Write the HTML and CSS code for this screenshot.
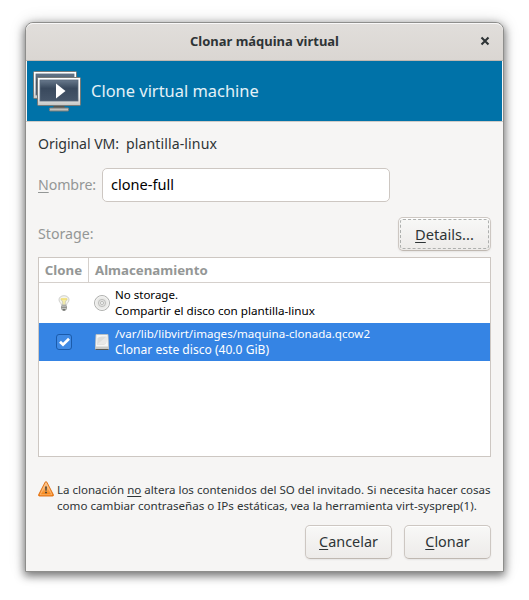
FILE: index.html
```html
<!DOCTYPE html>
<html lang="es">
<head>
<meta charset="utf-8">
<title>Clonar máquina virtual</title>
<link rel="stylesheet" href="styles.css">
</head>
<body>
<main class="window">
  <header class="titlebar">
    <h1 class="title">Clonar máquina virtual</h1>
    <svg class="close" width="10" height="10" viewBox="0 0 10 10"><path d="M1.500 1.500 8.500 8.500M8.500 1.500 1.500 8.500" stroke="#2e3436" stroke-width="2.100" fill="none"/></svg>
  </header>
  <section class="banner">
    <svg class="vm-icon" width="50" height="42" viewBox="0 0 50 42">
      <defs>
        <linearGradient id="frame" x1="0" y1="0" x2="0" y2="1"><stop offset="0" stop-color="#fff"/><stop offset=".7" stop-color="#eee"/><stop offset="1" stop-color="#c4c5c3"/></linearGradient>
        <linearGradient id="screen" x1="0" y1="0" x2="0" y2="1"><stop offset="0" stop-color="#68798c"/><stop offset=".4" stop-color="#39495d"/><stop offset="1" stop-color="#46566a"/></linearGradient>
      </defs>
      <rect x="1.500" y=".5" width="43" height="27" rx="1" fill="url(#frame)" stroke="#777a78"/>
      <rect x="4" y="3" width="38" height="21" fill="url(#screen)" stroke="#59697c" stroke-width=".8"/>
      <path d="M22 34h10l1 3H21z" fill="#555753"/>
      <rect x="17.500" y="37" width="19" height="3" rx=".5" fill="#bfc1be" stroke="#777a78"/>
      <rect x="5.500" y="6.500" width="43" height="28" rx="1" fill="url(#frame)" stroke="#777a78"/>
      <rect x="8" y="9" width="38" height="21" fill="url(#screen)" stroke="#59697c" stroke-width=".8"/>
      <path d="M24 12.500v15l9.500-7.500z" fill="#fff"/>
    </svg>
    <span class="banner-text">Clone virtual machine</span>
  </section>
  <section class="content">
    <div class="origin"><span class="origin-label">Original VM:</span><span class="origin-value">plantilla-linux</span></div>
    <div class="name-row"><label class="dim name-label"><u>N</u>ombre:</label><div class="entry">clone-full</div></div>
    <div class="storage-row"><span class="dim">Storage:</span><button class="button focused"><span><u>D</u>etails...</span></button></div>
    <div class="table">
      <div class="row head"><div class="cell-check">Clone</div><div class="cell-store">Almacenamiento</div></div>
      <div class="row first">
        <div class="cell-check">
          <svg width="16" height="16" viewBox="0 0 16 16"><path d="M8 .7C5 .7 3 2.400 3 4.800c0 2.400 2.300 3.200 2.500 5.200h5C10.700 8 13 7.200 13 4.800 13 2.400 11 .7 8 .7z" fill="#f4f4ee" stroke="#c3c4c0" stroke-width=".8"/><path d="M4.800 4.500h6.400L9.300 6.800v2.700H6.700V6.800z" fill="#f5eeaa"/><path d="M4.800 4h6.400" stroke="#f1da55" stroke-width="1.300"/><path d="M5 4.500 6.700 6.800v3M11 4.500 9.300 6.800v3" stroke="#b9b8a8" stroke-width=".6" fill="none"/><rect x="5.500" y="10.200" width="5" height="4.600" rx="1.200" fill="#c2c4c0" stroke="#888a85" stroke-width=".7"/><path d="M5.500 12.300h5" stroke="#777972" stroke-width=".8"/><path d="M6.700 15h2.600" stroke="#3a3d38"/></svg>
        </div>
        <div class="cell-store">
          <svg width="18" height="18" viewBox="0 0 18 18"><circle cx="9" cy="9" r="7.500" fill="#e9e9e7" stroke="#b0b1af"/><circle cx="9" cy="9" r="6.400" fill="none" stroke="#f6f6f5" stroke-width=".8"/><circle cx="9" cy="9" r="3.600" fill="#e3e3e1" stroke="#b4b5b3" stroke-width=".8"/><circle cx="9" cy="9" r="1.500" fill="#fff" stroke="#a0a29f" stroke-width=".7"/></svg>
          <p class="lines"><span class="t1">No storage.</span><span class="t2">Compartir el disco con plantilla-linux</span></p>
        </div>
      </div>
      <div class="row selected">
        <div class="cell-check">
          <svg width="16" height="16" viewBox="0 0 16 16"><rect x=".5" y=".5" width="15" height="15" rx="2.500" fill="#3f8ae5" stroke="#1b5bab"/><path d="M4 7.800 7 10.700 13 4.700" stroke="#fff" stroke-width="2.700" fill="none"/></svg>
        </div>
        <div class="cell-store">
          <svg width="18" height="18" viewBox="0 0 18 18"><path d="M3 1.500h12l.5 11.500v3.500h-13V13z" fill="#f5f5f4" stroke="#c0c1be" stroke-width=".8"/><path d="M4.500 5Q6 3.500 9 3.500h4.500V8q0 4-4.500 4h-5z" fill="#dcdddb"/><path d="M4 11.500 13.500 3.500V8q0 3.500-5 3.500z" fill="#e8e8e7"/><path d="M2.500 13.500h13v2.500h-13z" fill="#c9cac7"/><path d="M2.500 16.500h13" stroke="#555753"/></svg>
          <p class="lines"><span class="t3">/var/lib/libvirt/images/maquina-clonada.qcow2</span><span class="t4">Clonar este disco (40.0 GiB)</span></p>
        </div>
      </div>
    </div>
    <div class="notice">
      <svg width="16" height="16" viewBox="0 0 16 16"><defs><linearGradient id="warn" x1="0" y1="0" x2="0" y2="1"><stop offset="0" stop-color="#fac58e"/><stop offset=".5" stop-color="#f9ab5c"/><stop offset="1" stop-color="#f57900"/></linearGradient></defs><path d="M7.200 1.100Q8 0 8.800 1.100L15.400 13.800Q15.800 14.900 14.600 15H1.400Q.2 14.900.6 13.800z" fill="url(#warn)" stroke="#dc6a0c" stroke-width=".9"/><path d="M8 2.400 13.900 13.800H2.100z" fill="none" stroke="#fcc590" stroke-width=".7"/><path d="M7.200 5.500h1.600L8.500 9.800h-1zM7.200 10.800h1.600v1.500H7.200z" fill="#2e3436"/></svg>
      <p class="lines"><span class="n1">La clonación <u>no</u> altera los contenidos del SO del invitado. Si necesita hacer cosas</span><span class="n2">como cambiar contraseñas o IPs estáticas, vea la herramienta virt-sysprep(1).</span></p>
    </div>
    <footer class="actions"><button class="button cancel"><span><u>C</u>ancelar</span></button><button class="button clone"><span><u>C</u>lonar</span></button></footer>
  </section>
</main>
</body>
</html>
```
FILE: styles.css
```css
* { box-sizing: border-box; }
body {
  margin: 0;
  padding: 22px 25px 28px;
  height: 600px;
  overflow: hidden;
  background: #fff;
  color: #2e3436;
  font-family: "Noto Sans", sans-serif;
}
h1, p { margin: 0; }
svg { display: block; flex: none; }
u { text-decoration: underline; text-decoration-thickness: 1px; text-underline-offset: 2px; text-decoration-skip-ink: none; }
.window {
  width: 479px;
  height: 550px;
  border: 1px solid #8e8e8c;
  border-radius: 8px 8px 0 0;
  background: #f6f5f4;
  box-shadow: 0 3px 9px 1px rgba(0, 0, 0, .5), 0 0 18px rgba(0, 0, 0, .12);
  overflow: hidden;
}
.titlebar {
  display: flex;
  align-items: center;
  height: 38px;
  padding: 0 13px 2px 23px;
  border-bottom: 1px solid #bfb8b1;
  border-radius: 7px 7px 0 0;
  background: linear-gradient(#e1dedb, #dad6d2);
  box-shadow: inset 0 1px #f9f8f8;
}
.title { flex: 1; text-align: center; font-size: 12.980px; line-height: 18px; }
.banner {
  display: flex;
  align-items: center;
  height: 60px;
  margin: 0 1px;
  padding-left: 5px;
  background: #0072a8;
  color: #e4f1f7;
}
.vm-icon { margin-top: 2px; }
.banner-text { margin-left: 9px; font-size: 16.460px; line-height: 24px; }
.content { padding: 0 12px; border-top: 1px solid #d0ccc8; }
.origin { display: flex; gap: 7px; height: 46px; padding-top: 12px; font-size: 14.100px; line-height: 20px; white-space: nowrap; }
.origin-label { width: 81px; letter-spacing: -.06px; }
.origin-value { letter-spacing: .1px; }
.dim { color: #949796; font-size: 14.200px; line-height: 20px; }
.name-row { display: flex; align-items: center; height: 34px; }
.name-label { width: 64px; letter-spacing: -.1px; }
.entry {
  width: 288px;
  height: 34px;
  padding: 5px 8px;
  border: 1px solid #cdc7c2;
  border-radius: 5px;
  background: #fff;
  color: #000;
  font-size: 14.570px;
  line-height: 20px;
}
.storage-row { display: flex; align-items: center; justify-content: space-between; height: 34px; margin-top: 15px; }
.button {
  height: 34px;
  width: 87px;
  padding: 0 0 1px;
  border: 1px solid #cdc7c2;
  border-bottom-color: #bfb8b1;
  border-radius: 5px;
  background: linear-gradient(#f8f8f7, #edebe9);
  box-shadow: inset 0 1px #fff, 0 1px 2px rgba(0, 0, 0, .07);
  color: #2e3436;
  font: 14.400px/20px "Noto Sans", sans-serif;
}
.focused { width: 93px; outline: 1px dashed #aeb0ae; outline-offset: -3px; font-size: 14.650px; }
.table { height: 200px; margin-top: 6px; border: 1px solid #cdc7c2; background: #fff; color: #000; }
.row { display: flex; }
.cell-check { display: flex; align-items: center; justify-content: center; width: 50px; }
.cell-store { display: flex; align-items: center; flex: 1; padding-left: 4px; }
.head { height: 25px; border-bottom: 1px solid #d5d0cc; color: #949796; font-size: 13.250px; font-weight: 700; line-height: 20px; }
.head .cell-check { border-right: 1px solid #d5d0cc; }
.head .cell-store { padding-left: 6px; }
.first { height: 40px; }
.selected { height: 38px; background: #3584e4; color: #fff; }
.lines { display: flex; flex-direction: column; margin-left: 4px; font-size: 11.600px; line-height: 16px; white-space: nowrap; }
.t1 { font-size: 11.520px; }
.t2 { font-size: 11.660px; }
.t3 { font-size: 11.580px; }
.t4 { font-size: 12.080px; }
.notice { display: flex; height: 32px; margin-top: 25px; }
.notice svg { margin-top: -1px; }
.notice .lines { margin-left: 3px; }
.n1 { font-size: 11.540px; }
.n2 { font-size: 11.610px; }
.actions { display: flex; justify-content: flex-end; gap: 12px; margin-top: 11px; }
```
